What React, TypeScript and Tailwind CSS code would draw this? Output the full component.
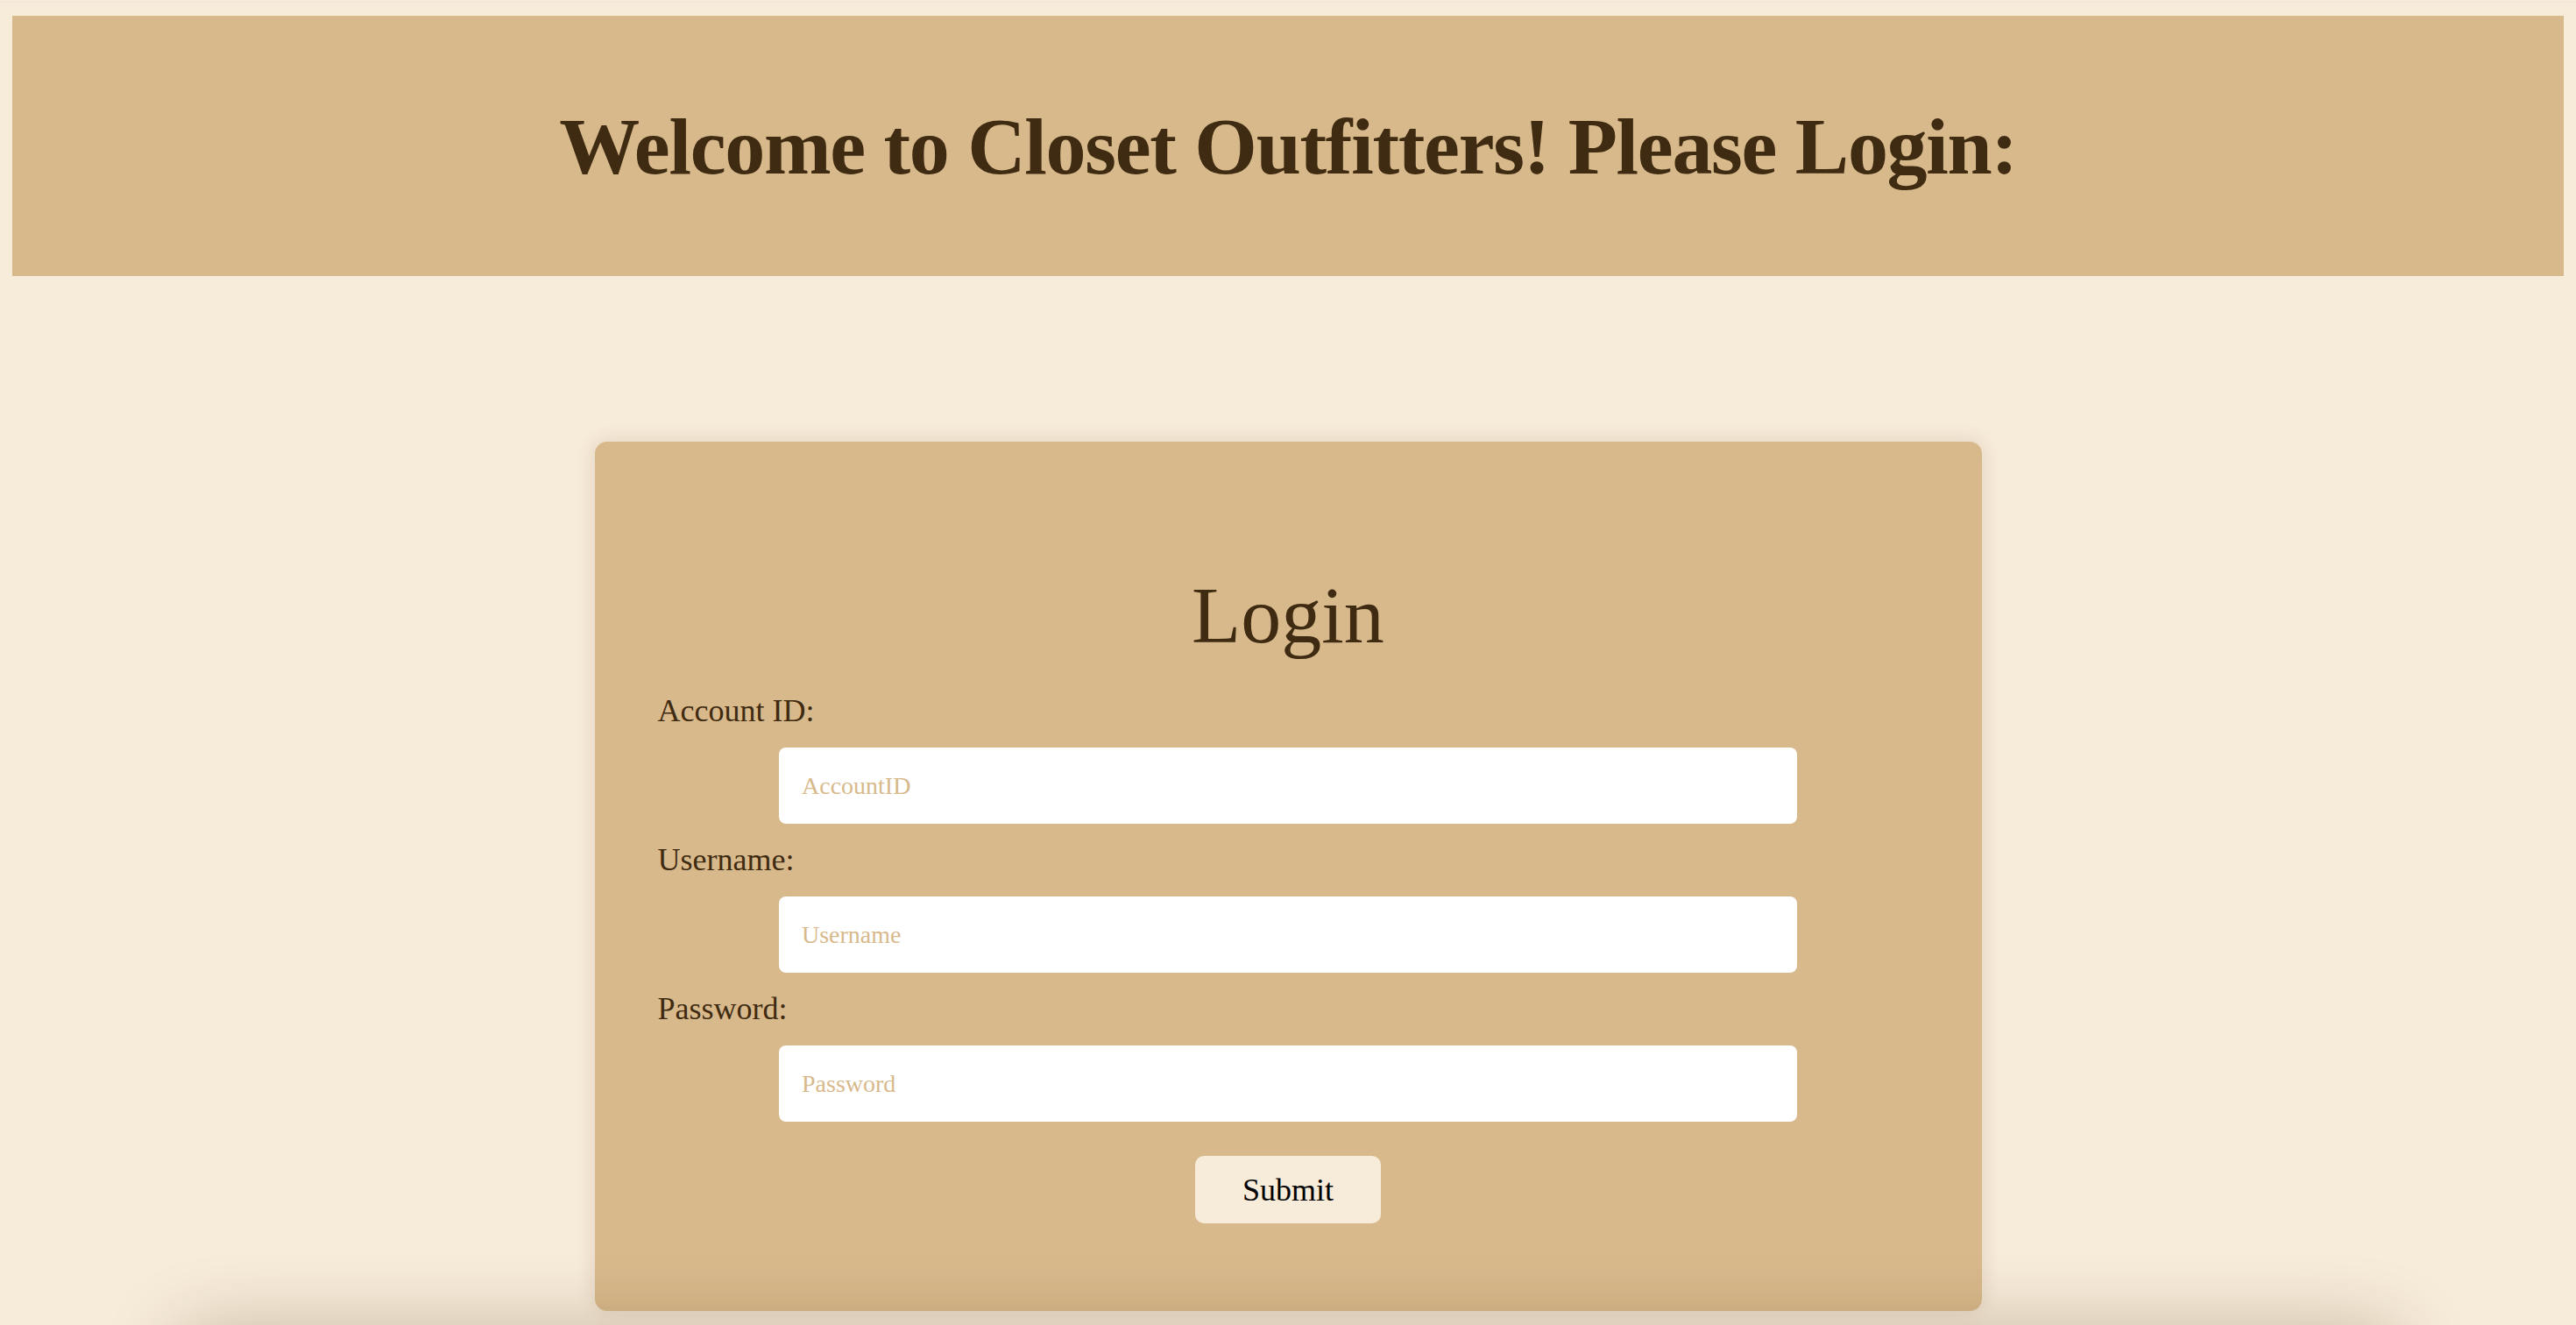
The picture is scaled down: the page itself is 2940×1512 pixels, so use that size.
import React from "react";

const serif = { fontFamily: '"Liberation Serif", "Times New Roman", Times, serif' };

function Field({ label, placeholder, type = "text", first = false }: { label: string; placeholder: string; type?: string; first?: boolean }) {
  return (
    <div className={first ? "mt-[45px]" : "mt-[23px]"}>
      <label className="block text-[36px] leading-[36px] text-[#3f2b11]">{label}</label>
      <input
        type={type}
        placeholder={placeholder}
        className="mt-[24px] mx-auto block w-[1162px] h-[87px] rounded-[8px] bg-white pl-[26px] text-[28px] text-[#3f2b11] placeholder:text-[#d8b98c] outline-none border-0"
        style={serif}
      />
    </div>
  );
}

export default function App() {
  return (
    <div className="min-h-screen bg-[#f7ebd9] overflow-hidden" style={serif}>
      <div className="mt-[2px] h-[1px] bg-[#f2e2dd]" />
      <header className="mx-[14px] mt-[15px] h-[297px] bg-[#d8b98c] flex items-center justify-center">
        <h1 className="text-[92px] leading-[92px] font-bold tracking-[-1.3px] text-[#3f2b11]">
          Welcome to Closet Outfitters! Please Login:
        </h1>
      </header>

      <main className="mx-auto mt-[189px] w-[1583px] rounded-[14px] bg-[#d8b98c] px-[72px] pt-[152px] pb-[100px] shadow-[0_0_22px_rgba(90,60,20,0.14)]">
        <h2 className="text-center text-[92px] leading-[92px] text-[#3f2b11]">Login</h2>
        <form onSubmit={(e) => e.preventDefault()}>
          <Field first label="Account ID:" placeholder="AccountID" />
          <Field label="Username:" placeholder="Username" />
          <Field label="Password:" placeholder="Password" type="password" />
          <div className="mt-[39px] flex justify-center">
            <button
              type="submit"
              className="w-[212px] h-[77px] rounded-[10px] bg-[#f7ebd9] text-[36px] leading-[36px] text-black"
              style={serif}
            >
              Submit
            </button>
          </div>
        </form>
      </main>

      <div className="mx-auto mt-[30px] h-[140px] w-[2520px] bg-[#f7ebd9] shadow-[0_0_90px_0_rgba(60,40,10,0.32)]" />
    </div>
  );
}
